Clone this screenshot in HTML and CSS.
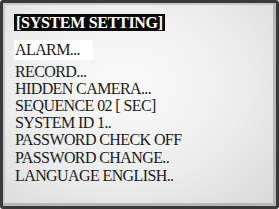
FILE: index.html
```html
<!DOCTYPE html>
<html lang="en">
<head>
    <meta charset="UTF-8">
    <title>System Setting</title>
    <link rel="stylesheet" href="styles.css">
</head>
<body>
    <div class="osd-screen">
        <div class="osd-title">[SYSTEM SETTING]</div>
        <ul class="osd-menu">
            <li class="selected">ALARM...</li>
            <li class="gap">RECORD...</li>
            <li>HIDDEN CAMERA...</li>
            <li>SEQUENCE 02 [ SEC]</li>
            <li>SYSTEM ID 1..</li>
            <li class="wide">PASSWORD CHECK OFF</li>
            <li class="wide">PASSWORD CHANGE..</li>
            <li>LANGUAGE ENGLISH..</li>
        </ul>
    </div>
</body>
</html>
```

FILE: styles.css
```css
* {
    box-sizing: border-box;
    margin: 0;
    padding: 0;
}
body {
    width: 279px;
    height: 209px;
    background: #fff;
    font-family: 'Liberation Serif', 'Times New Roman', serif;
}
.osd-screen {
    width: 279px;
    height: 209px;
    border: 3px solid #3a3a3a;
    border-radius: 3px;
    box-shadow: inset -3px -3px 0 #b8b8b8, inset 2px 2px 0 #c8c8c8;
    background: radial-gradient(ellipse at 45% 40%, #fbfbfb 0%, #ececec 55%, #d8d8d8 100%);
    padding: 11px 10px 0 11px;
}
.osd-title {
    display: inline-block;
    background: #0a0a0a;
    color: #fff;
    font-weight: bold;
    font-size: 16px;
    line-height: 17px;
    padding: 0 2px;
    letter-spacing: -0.3px;
}
.osd-menu {
    list-style: none;
    margin-top: 8px;
    color: #1a1a1a;
    font-size: 16px;
}
.osd-menu li {
    line-height: 17px;
    padding-left: 1px;
    letter-spacing: -0.6px;
}
.osd-menu li.selected {
    display: inline-block;
    background: #fff;
    width: 79px;
    line-height: 20px;
}
.osd-menu li.gap {
    margin-top: 3px;
}
.osd-menu li.wide {
    line-height: 18px;
}
```
